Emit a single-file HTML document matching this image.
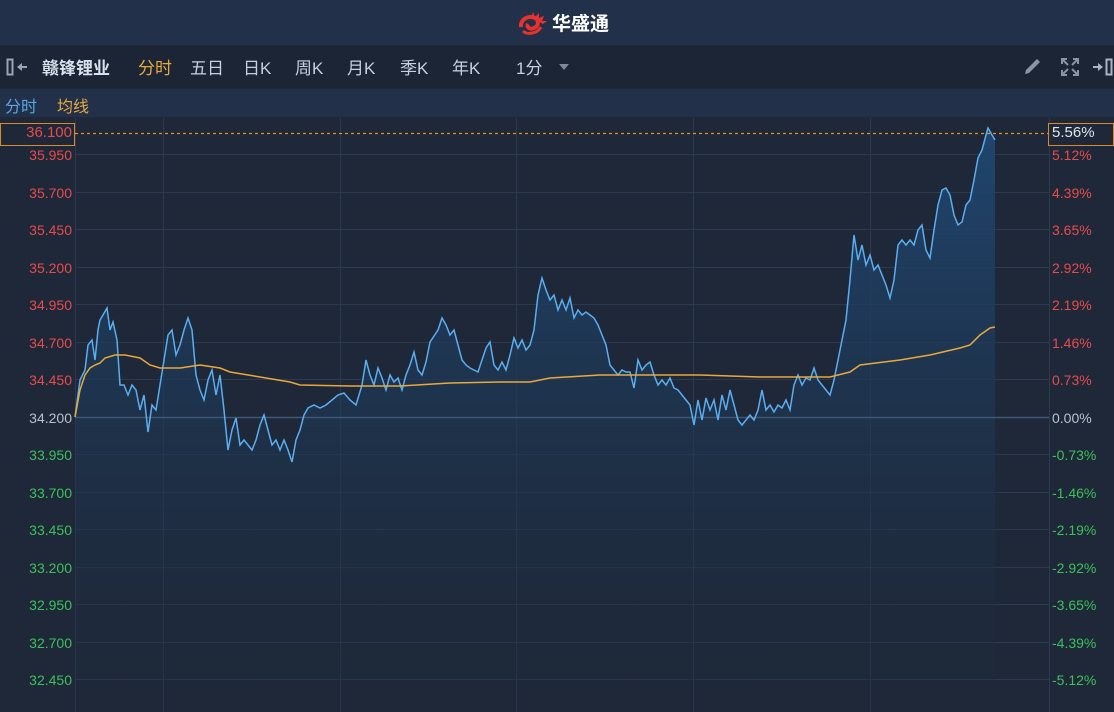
<!DOCTYPE html>
<html><head><meta charset="utf-8"><style>
*{margin:0;padding:0;box-sizing:border-box}
body{width:1114px;height:712px;overflow:hidden;background:#1e2838;font-family:"Liberation Sans","Noto Sans CJK SC",sans-serif;position:relative}
.top{position:absolute;left:0;top:0;width:1114px;height:45px;background:#22304a}
.logo{position:absolute;left:517px;top:9px;display:flex;align-items:center;color:#fff;font-size:19px;font-weight:bold}
.tb{position:absolute;left:0;top:46px;width:1114px;height:42px;background:#1b2535;color:#c5cfdd;font-size:17px}
.tb span{position:absolute;top:8px}
.tb svg{position:absolute}
.sb{position:absolute;left:0;top:89px;width:1114px;height:28px;background:#22304a;font-size:16px}
.lab{position:absolute;font-size:14px;width:72px;text-align:right}
.rl{position:absolute;font-size:14px;left:1052px}
</style></head><body>
<div class="top"></div>
<div class="logo"><svg width="32" height="24" viewBox="0 0 32 24"><path d="M4 16 C3 8 12 4 18 7 C22 9 22 15 17 17 C13 19 9 16 11 13" fill="none" stroke="#e8322d" stroke-width="4"/><path d="M14 6 L16 1 L18 6 L22 2 L22 7 L27 5 L25 10 L30 10 L26 13" fill="#e8322d"/><path d="M6 20 C10 24 20 23 24 16" fill="none" stroke="#e8322d" stroke-width="3"/></svg><span style="margin-left:3px">华盛通</span></div>
<div class="tb">
<svg style="left:6px;top:12px" width="26" height="18" viewBox="0 0 26 18"><rect x="1.5" y="1.5" width="5" height="15" fill="none" stroke="#9aa4b2" stroke-width="2"/><path d="M11 9 L16 5 L16 8 L21 8 L21 10 L16 10 L16 13 Z" fill="#9aa4b2"/></svg>
<span style="left:42px;font-weight:bold;color:#d8e0ec">赣锋锂业</span>
<span style="left:138px;color:#e9a93a">分时</span>
<span style="left:190px">五日</span>
<span style="left:243px">日K</span>
<span style="left:295px">周K</span>
<span style="left:347px">月K</span>
<span style="left:400px">季K</span>
<span style="left:452px">年K</span>
<span style="left:516px">1分</span>
<svg style="left:559px;top:18px" width="10" height="7"><path d="M0 0 L10 0 L5 6 Z" fill="#7d8898"/></svg>
<svg style="left:1022px;top:11px" width="22" height="20" viewBox="0 0 22 20"><path d="M3 17 L4 13 L15 2 L18 5 L7 16 Z" fill="#8994a4"/></svg>
<svg style="left:1060px;top:11px" width="20" height="20" viewBox="0 0 20 20" fill="none" stroke="#8994a4" stroke-width="2"><path d="M2 7 V2 H7 M13 2 H18 V7 M18 13 V18 H13 M7 18 H2 V13 M3 3 L8 8 M17 3 L12 8 M17 17 L12 12 M3 17 L8 12"/></svg>
<svg style="left:1092px;top:12px" width="22" height="18" viewBox="0 0 22 18"><path d="M1 8 L6 8 L6 5 L11 9 L6 13 L6 10 L1 10 Z" fill="#aab4c3"/><rect x="14.5" y="1.5" width="5" height="15" fill="none" stroke="#aab4c3" stroke-width="2"/></svg>
</div>
<div class="sb"><span style="position:absolute;left:5px;top:4px;color:#5aa6e8">分时</span><span style="position:absolute;left:57px;top:4px;color:#e9a93a">均线</span></div>
<svg style="position:absolute;left:0;top:118px" width="1114" height="594">
<defs><linearGradient id="g" x1="0" y1="0" x2="0" y2="1"><stop offset="0" stop-color="#1f4670"/><stop offset="1" stop-color="#1e2838" stop-opacity="0.3"/></linearGradient></defs>
<g stroke="#2c3a50" stroke-width="1">
<line x1="75" x2="1049" y1="36.5" y2="36.5"/><line x1="75" x2="1049" y1="74.5" y2="74.5"/><line x1="75" x2="1049" y1="111.5" y2="111.5"/><line x1="75" x2="1049" y1="149.5" y2="149.5"/><line x1="75" x2="1049" y1="186.5" y2="186.5"/><line x1="75" x2="1049" y1="224.5" y2="224.5"/><line x1="75" x2="1049" y1="261.5" y2="261.5"/>
<line x1="75" x2="1049" y1="336.5" y2="336.5"/><line x1="75" x2="1049" y1="374.5" y2="374.5"/><line x1="75" x2="1049" y1="411.5" y2="411.5"/><line x1="75" x2="1049" y1="449.5" y2="449.5"/><line x1="75" x2="1049" y1="486.5" y2="486.5"/><line x1="75" x2="1049" y1="524.5" y2="524.5"/><line x1="75" x2="1049" y1="561.5" y2="561.5"/>
<line x1="163.5" x2="163.5" y1="0" y2="594"/><line x1="340.5" x2="340.5" y1="0" y2="594"/><line x1="516.5" x2="516.5" y1="0" y2="594"/><line x1="693.5" x2="693.5" y1="0" y2="594"/><line x1="870.5" x2="870.5" y1="0" y2="594"/>
<line x1="75.5" x2="75.5" y1="0" y2="594"/><line x1="1049.5" x2="1049.5" y1="0" y2="594"/>
</g>
<g transform="translate(0,-118)">
<polygon fill="url(#g)" points="75,712 75,417 80,380 85,370 88,345 92,340 95,360 98,330 100,320 103,315 107,308 110,330 113,322 117,340 120,385 124,385 128,395 132,385 136,390 140,410 144,395 148,432 152,405 156,410 160,385 164,360 168,335 172,330 176,355 180,345 184,330 188,318 192,330 196,375 200,390 204,400 208,380 212,370 216,395 220,375 224,410 228,450 232,430 236,418 240,445 244,440 248,445 252,450 256,440 260,425 264,415 268,430 272,445 276,440 280,450 284,440 288,450 292,462 296,440 300,430 304,415 308,408 314,405 320,408 326,405 332,400 338,395 344,393 350,400 356,405 362,385 366,360 370,375 374,385 378,368 382,378 386,390 390,375 394,382 398,378 402,390 406,375 410,365 414,352 418,370 422,375 426,362 430,342 434,336 438,330 442,318 446,325 450,335 454,330 458,345 462,360 466,365 470,368 474,370 478,372 482,360 486,348 490,342 494,365 498,370 502,362 506,370 510,355 514,338 518,348 522,340 526,350 530,345 534,330 538,295 542,278 546,290 550,300 554,295 558,310 562,300 566,310 570,298 574,318 578,310 582,315 586,312 590,315 594,318 598,325 602,335 606,345 610,365 614,370 618,375 622,370 626,372 630,372 634,388 638,360 642,370 646,365 650,362 654,375 658,385 662,380 666,385 670,378 674,388 678,390 682,395 686,400 690,405 694,425 698,400 702,420 706,398 710,410 714,400 718,420 722,395 726,410 730,390 734,405 738,420 742,425 746,420 750,415 754,420 758,410 762,390 766,410 770,405 774,412 778,405 782,408 786,400 790,410 794,385 798,375 802,385 806,378 810,380 814,368 818,380 822,385 826,390 830,395 834,380 838,360 842,340 846,320 850,280 854,235 858,260 862,245 866,265 870,255 874,270 878,265 882,275 886,285 890,298 894,280 898,245 902,240 906,245 910,240 914,245 918,230 922,225 926,250 930,258 934,230 938,205 942,190 946,188 950,195 954,215 958,225 962,222 966,205 970,200 974,180 978,158 982,150 986,135 988,128 992,135 995,140 995,712"/>
<line x1="75" x2="1049" y1="417.5" y2="417.5" stroke="#3d5675" stroke-width="1.5"/>
<line x1="75" x2="1049" y1="133.5" y2="133.5" stroke="#e0902a" stroke-width="1.2" stroke-dasharray="3,3"/>
<polyline fill="none" stroke="#5aaef0" stroke-width="1.5" points="75,417 80,380 85,370 88,345 92,340 95,360 98,330 100,320 103,315 107,308 110,330 113,322 117,340 120,385 124,385 128,395 132,385 136,390 140,410 144,395 148,432 152,405 156,410 160,385 164,360 168,335 172,330 176,355 180,345 184,330 188,318 192,330 196,375 200,390 204,400 208,380 212,370 216,395 220,375 224,410 228,450 232,430 236,418 240,445 244,440 248,445 252,450 256,440 260,425 264,415 268,430 272,445 276,440 280,450 284,440 288,450 292,462 296,440 300,430 304,415 308,408 314,405 320,408 326,405 332,400 338,395 344,393 350,400 356,405 362,385 366,360 370,375 374,385 378,368 382,378 386,390 390,375 394,382 398,378 402,390 406,375 410,365 414,352 418,370 422,375 426,362 430,342 434,336 438,330 442,318 446,325 450,335 454,330 458,345 462,360 466,365 470,368 474,370 478,372 482,360 486,348 490,342 494,365 498,370 502,362 506,370 510,355 514,338 518,348 522,340 526,350 530,345 534,330 538,295 542,278 546,290 550,300 554,295 558,310 562,300 566,310 570,298 574,318 578,310 582,315 586,312 590,315 594,318 598,325 602,335 606,345 610,365 614,370 618,375 622,370 626,372 630,372 634,388 638,360 642,370 646,365 650,362 654,375 658,385 662,380 666,385 670,378 674,388 678,390 682,395 686,400 690,405 694,425 698,400 702,420 706,398 710,410 714,400 718,420 722,395 726,410 730,390 734,405 738,420 742,425 746,420 750,415 754,420 758,410 762,390 766,410 770,405 774,412 778,405 782,408 786,400 790,410 794,385 798,375 802,385 806,378 810,380 814,368 818,380 822,385 826,390 830,395 834,380 838,360 842,340 846,320 850,280 854,235 858,260 862,245 866,265 870,255 874,270 878,265 882,275 886,285 890,298 894,280 898,245 902,240 906,245 910,240 914,245 918,230 922,225 926,250 930,258 934,230 938,205 942,190 946,188 950,195 954,215 958,225 962,222 966,205 970,200 974,180 978,158 982,150 986,135 988,128 992,135 995,140"/>
<polyline fill="none" stroke="#e9a93a" stroke-width="1.5" points="75,417 80,390 85,375 90,368 95,365 100,363 105,358 115,355 125,355 140,358 150,365 160,368 180,368 200,365 220,368 230,372 260,377 290,382 300,385 350,386 400,386 450,383 500,382 530,382 550,378 600,375 650,375 700,375 760,377 830,377 850,372 860,365 900,360 930,355 960,348 970,345 980,335 990,328 995,327"/>
</g>
<rect x="0.5" y="5.5" width="74" height="22" fill="#1e2838" stroke="#d98a2a"/>
<rect x="1048.5" y="5.5" width="65" height="22" fill="#1e2838" stroke="#d98a2a"/>
</svg>
<div class="lab" style="top:124px;left:0;color:#e84b4b;font-size:15px">36.100</div>
<div class="rl" style="top:124px;color:#dde4ee;font-size:15px">5.56%</div>
<div class="lab" style="top:147px;color:#e84b4b">35.950</div>
<div class="lab" style="top:185px;color:#e84b4b">35.700</div>
<div class="lab" style="top:222px;color:#e84b4b">35.450</div>
<div class="lab" style="top:260px;color:#e84b4b">35.200</div>
<div class="lab" style="top:297px;color:#e84b4b">34.950</div>
<div class="lab" style="top:335px;color:#e84b4b">34.700</div>
<div class="lab" style="top:372px;color:#e84b4b">34.450</div>
<div class="lab" style="top:410px;color:#b8c0cc">34.200</div>
<div class="lab" style="top:447px;color:#3cc05a">33.950</div>
<div class="lab" style="top:485px;color:#3cc05a">33.700</div>
<div class="lab" style="top:522px;color:#3cc05a">33.450</div>
<div class="lab" style="top:560px;color:#3cc05a">33.200</div>
<div class="lab" style="top:597px;color:#3cc05a">32.950</div>
<div class="lab" style="top:635px;color:#3cc05a">32.700</div>
<div class="lab" style="top:672px;color:#3cc05a">32.450</div>
<div class="rl" style="top:147px;color:#e84b4b">5.12%</div>
<div class="rl" style="top:185px;color:#e84b4b">4.39%</div>
<div class="rl" style="top:222px;color:#e84b4b">3.65%</div>
<div class="rl" style="top:260px;color:#e84b4b">2.92%</div>
<div class="rl" style="top:297px;color:#e84b4b">2.19%</div>
<div class="rl" style="top:335px;color:#e84b4b">1.46%</div>
<div class="rl" style="top:372px;color:#e84b4b">0.73%</div>
<div class="rl" style="top:410px;color:#b8c0cc">0.00%</div>
<div class="rl" style="top:447px;color:#3cc05a">-0.73%</div>
<div class="rl" style="top:485px;color:#3cc05a">-1.46%</div>
<div class="rl" style="top:522px;color:#3cc05a">-2.19%</div>
<div class="rl" style="top:560px;color:#3cc05a">-2.92%</div>
<div class="rl" style="top:597px;color:#3cc05a">-3.65%</div>
<div class="rl" style="top:635px;color:#3cc05a">-4.39%</div>
<div class="rl" style="top:672px;color:#3cc05a">-5.12%</div>
</body></html>
